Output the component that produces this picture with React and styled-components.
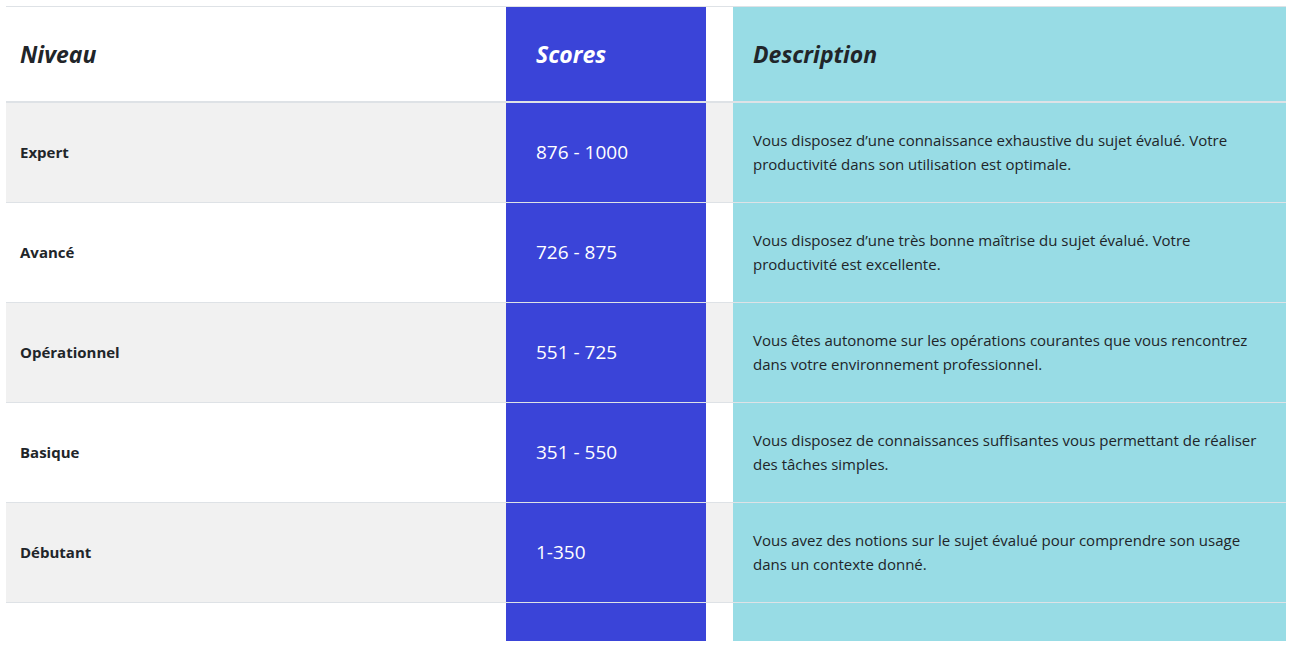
import React from 'react'
import styled, {createGlobalStyle} from 'styled-components'

const GlobalStyle = createGlobalStyle`
	body {
		margin: 0;
		background: #fff;
		font-family: 'Open Sans', 'Noto Sans', sans-serif;
		color: #212529;
	}
`

const Wrap = styled.div`
	padding: 6px 9px 10px 6px;
`

const Table = styled.table`
	width: 1280px;
	border-collapse: collapse;
	table-layout: fixed;
	border-top: 1px solid #dee2e6;
`

const Col = styled.col`
	width: ${p => p.$w}px;
`

const colBg = {
	score: '#3a44d8',
	desc: '#98dce5',
}

const Th = styled.th`
	height: 94px;
	padding: 0 ${p => (p.$kind === 'score' ? 30 : p.$kind === 'desc' ? 20 : 14)}px;
	text-align: left;
	vertical-align: middle;
	font-size: 23px;
	font-weight: 700;
	font-style: italic;
	border-bottom: 2px solid #dee2e6;
	background: ${p => colBg[p.$kind] || 'transparent'};
	color: ${p => (p.$kind === 'score' ? '#fff' : '#212529')};
`

const Row = styled.tr`
	background: ${p => (p.$shade ? '#f1f1f1' : '#fff')};
`

const Td = styled.td`
	height: 97px;
	padding: 0 ${p => (p.$kind === 'score' ? 30 : p.$kind === 'desc' ? 20 : 14)}px 2px;
	vertical-align: middle;
	border-top: 1px solid #dee2e6;
	background: ${p => colBg[p.$kind] || 'transparent'};
	color: ${p => (p.$kind === 'score' ? '#fff' : '#212529')};
	font-size: ${p => (p.$kind === 'score' ? 19 : 15)}px;
	font-weight: ${p => (p.$kind === 'level' ? 700 : 400)};
	line-height: 24px;
`

const Filler = styled.td`
	height: 38px;
	padding: 0;
	border-top: 1px solid #dee2e6;
	background: ${p => colBg[p.$kind] || '#fff'};
`

const levels = [
	{
		name: 'Expert',
		score: '876 - 1000',
		desc: 'Vous disposez d\u2019une connaissance exhaustive du sujet évalué. Votre productivité dans son utilisation est optimale.',
	},
	{
		name: 'Avancé',
		score: '726 - 875',
		desc: 'Vous disposez d\u2019une très bonne maîtrise du sujet évalué. Votre productivité est excellente.',
	},
	{
		name: 'Opérationnel',
		score: '551 - 725',
		desc: 'Vous êtes autonome sur les opérations courantes que vous rencontrez dans votre environnement professionnel.',
	},
	{
		name: 'Basique',
		score: '351 - 550',
		desc: 'Vous disposez de connaissances suffisantes vous permettant de réaliser des tâches simples.',
	},
	{
		name: 'Débutant',
		score: '1-350',
		desc: 'Vous avez des notions sur le sujet évalué pour comprendre son usage dans un contexte donné.',
	},
]

export default function App() {
	return (
		<Wrap>
			<GlobalStyle />
			<Table>
				<colgroup>
					<Col $w={500} />
					<Col $w={200} />
					<Col $w={27} />
					<Col $w={553} />
				</colgroup>
				<thead>
					<tr>
						<Th $kind='level'>Niveau</Th>
						<Th $kind='score'>Scores</Th>
						<Th />
						<Th $kind='desc'>Description</Th>
					</tr>
				</thead>
				<tbody>
					{levels.map((l, i) => (
						<Row key={l.name} $shade={i % 2 === 0}>
							<Td $kind='level'>{l.name}</Td>
							<Td $kind='score'>{l.score}</Td>
							<Td />
							<Td $kind='desc'>{l.desc}</Td>
						</Row>
					))}
					<tr>
						<Filler />
						<Filler $kind='score' />
						<Filler />
						<Filler $kind='desc' />
					</tr>
				</tbody>
			</Table>
		</Wrap>
	)
}
